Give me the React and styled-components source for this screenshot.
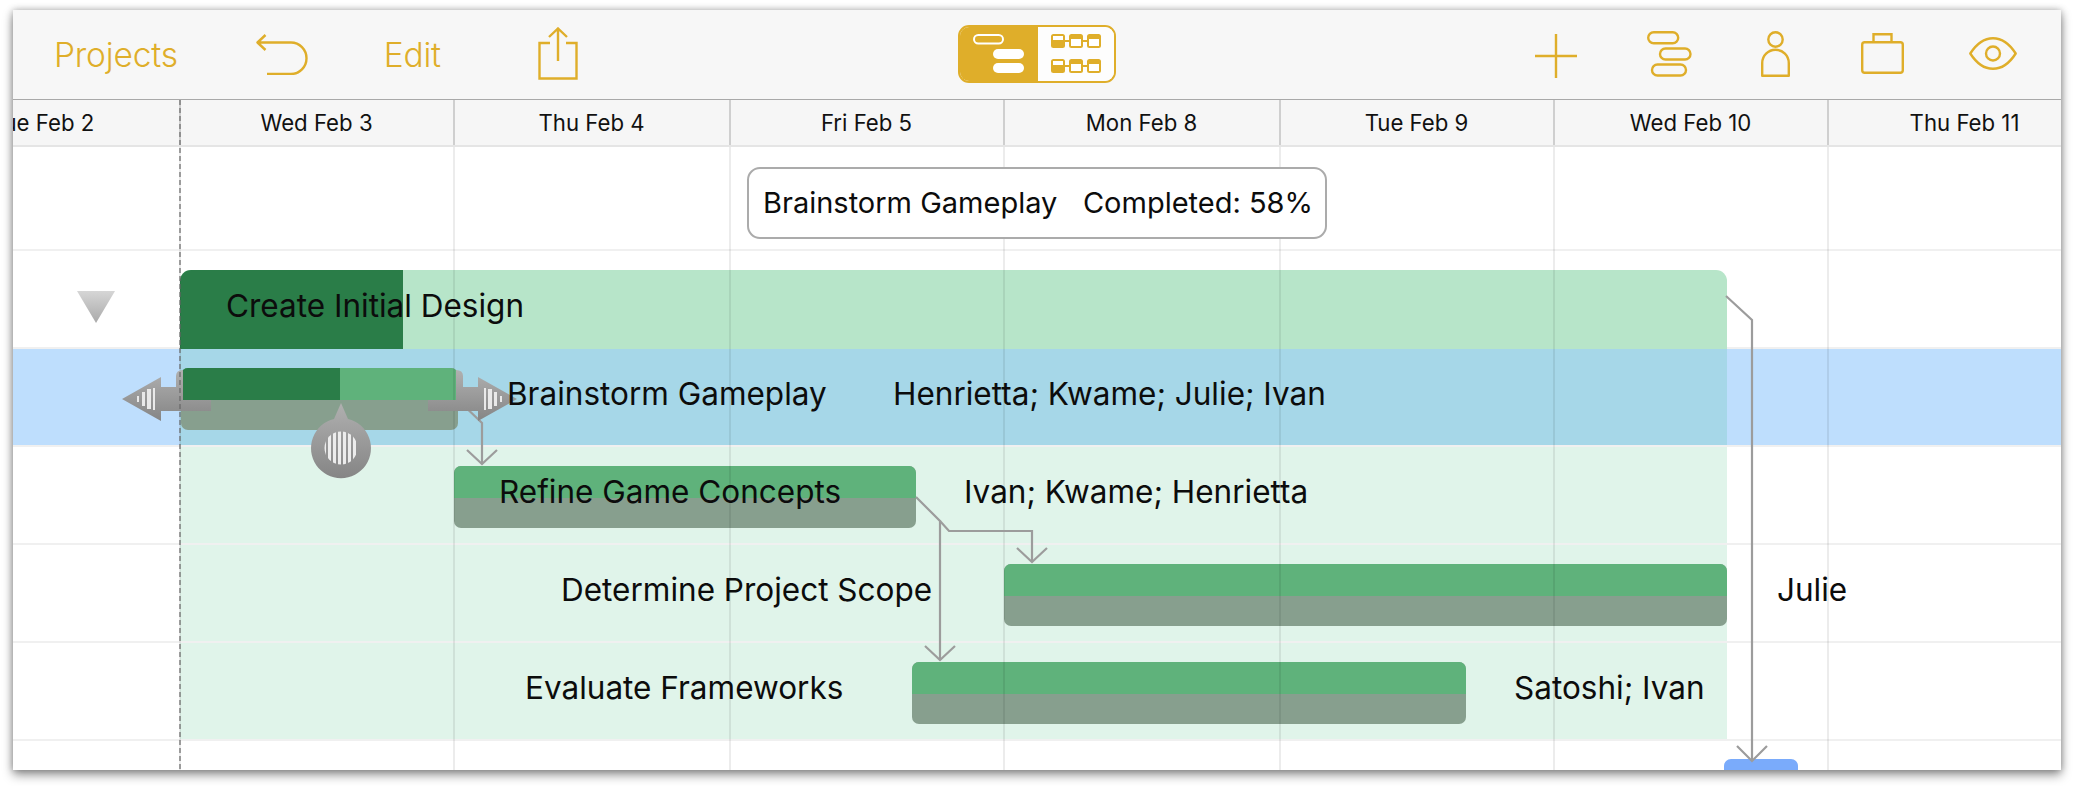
import React from "react";
import styled, { createGlobalStyle } from "styled-components";

const GOLD = "#dfae2a";
const COLUMN_ORIGIN = -106;
const FONT = `Inter, "Noto Sans", "Liberation Sans", sans-serif`;

const Global = createGlobalStyle`
  html, body { margin: 0; background: #fff; }
  body { font-family: ${FONT}; overflow: hidden; }
  #root { width: 2074px; height: 786px; }
`;

const Page = styled.div`
  width: 2074px;
  height: 786px;
  padding: 10px 13px 16px;
  box-sizing: border-box;
`;

const Window = styled.div`
  position: relative;
  width: 2048px;
  height: 760px;
  overflow: hidden;
  background: #fff;
  display: flex;
  flex-direction: column;
`;

const WindowShadow = styled.div`
  width: 2048px;
  height: 760px;
  box-shadow: 0 0 7px rgba(0, 0, 0, 0.28), 0 5px 10px rgba(0, 0, 0, 0.4);
`;

const Toolbar = styled.header`
  height: 89px;
  flex: none;
  display: grid;
  grid-template-columns: 1fr auto 1fr;
  align-items: center;
  background: #f7f7f7;
  border-bottom: 1px solid #a9a9a9;
  color: ${GOLD};
`;

const ToolGroup = styled.div`
  display: flex;
  align-items: center;
  justify-content: ${(p) => (p.$end ? "flex-end" : "flex-start")};
  padding: ${(p) => (p.$end ? "0 44px 0 0" : "0 0 0 41px")};
`;

const ToolText = styled.span`
  font-size: 33.5px;
  font-weight: 300;
  letter-spacing: -0.2px;
  margin-left: ${(p) => p.$gap || 0}px;
`;

const ToolIcon = styled.svg`
  display: block;
  flex: none;
  margin-left: ${(p) => p.$gap || 0}px;
  margin-top: ${(p) => (p.$shift || 0) * 2}px;
  fill: none;
  stroke: ${GOLD};
  stroke-width: 2.4;
`;

const Segmented = styled.div`
  display: flex;
  width: 158px;
  height: 58px;
  margin-top: -2px;
  box-sizing: border-box;
  border: 2px solid ${GOLD};
  border-radius: 11px;
  overflow: hidden;
`;

const Segment = styled.div`
  display: flex;
  align-items: center;
  justify-content: center;
  width: ${(p) => (p.$active ? "78px" : "76px")};
  background: ${(p) => (p.$active ? GOLD : "#fdfdfd")};
`;

const DayHeader = styled.div`
  height: 47px;
  flex: none;
  display: flex;
  box-sizing: border-box;
  margin-left: ${COLUMN_ORIGIN}px;
  background: #f6f6f6;
  border-bottom: 2px solid #e5e5e5;
  width: calc(100% - ${COLUMN_ORIGIN}px);
`;

const DayCell = styled.div`
  flex: 0 0 ${(p) => p.$width}px;
  box-sizing: border-box;
  display: flex;
  align-items: center;
  justify-content: center;
  padding-right: 1px;
  border-right: 2px solid #cfcfcf;
  font-size: 22.2px;
  color: #111;
  white-space: nowrap;
`;

const Rows = styled.div`
  flex: 1;
  display: flex;
  flex-direction: column;
`;

const Row = styled.div`
  position: relative;
  flex: none;
  box-sizing: border-box;
  height: ${(p) => p.$height}px;
  border-bottom: ${(p) => (p.$last ? "none" : "2px solid #f0f0f0")};
  background: ${(p) => (p.$selected ? "#bedefd" : "transparent")};
`;

const TooltipRow = styled(Row)`
  display: flex;
  justify-content: center;
  padding-top: 20px;
`;

const GroupFill = styled.div`
  position: absolute;
  top: 0;
  bottom: 0;
  left: 167px;
  width: 1547px;
  background: rgba(0, 165, 80, 0.12);
`;

const Bar = styled.div`
  position: absolute;
  top: 19px;
  left: ${(p) => p.$left}px;
  width: ${(p) => p.$width}px;
  height: 62px;
  border-radius: 7px;
  overflow: hidden;
  background: #879f8e;
`;

const BarPlan = styled.div`
  height: 32px;
  background: #5fb27b;
`;

const BarDone = styled.div`
  height: 100%;
  width: ${(p) => p.$width}px;
  background: #2a7d48;
`;

const GroupBar = styled.div`
  position: absolute;
  top: 19px;
  left: 167px;
  width: 1547px;
  height: 79px;
  border-radius: 11px 11px 0 0;
  overflow: hidden;
  background: #b7e5c9;
`;

const MilestoneBar = styled.div`
  position: absolute;
  top: 18px;
  left: 1711px;
  width: 74px;
  height: 30px;
  border-radius: 7px 7px 0 0;
  background: #7aabfb;
`;

const Label = styled.span`
  position: absolute;
  z-index: 5;
  left: ${(p) => p.$left}px;
  top: ${(p) => p.$top ?? 25}px;
  font-size: 31.5px;
  line-height: 40px;
  color: #0c0c0c;
  white-space: nowrap;
`;

const Disclosure = styled.svg`
  position: absolute;
  left: 64px;
  top: 40px;
`;

const Tooltip = styled.div`
  z-index: 6;
  width: 580px;
  height: 72px;
  box-sizing: border-box;
  padding: 0 12px 2px 14px;
  display: flex;
  align-items: center;
  justify-content: space-between;
  background: #fff;
  border: 2px solid #ababab;
  border-radius: 13px;
  font-size: 29px;
  color: #0c0c0c;
  white-space: nowrap;
`;

const GridLines = styled.div`
  position: absolute;
  z-index: 2;
  top: 137px;
  bottom: 0;
  left: ${COLUMN_ORIGIN}px;
  display: flex;
  pointer-events: none;
`;

const GridLine = styled.div`
  flex: 0 0 ${(p) => p.$width}px;
  box-sizing: border-box;
  border-right: 2px solid rgba(0, 0, 0, 0.075);
`;

const Overlay = styled.svg`
  position: absolute;
  z-index: 3;
  inset: 0;
  pointer-events: none;
`;

const days = [
  { name: "Tue Feb 2", width: 274 },
  { name: "Wed Feb 3", width: 274 },
  { name: "Thu Feb 4", width: 276 },
  { name: "Fri Feb 5", width: 274 },
  { name: "Mon Feb 8", width: 276 },
  { name: "Tue Feb 9", width: 274 },
  { name: "Wed Feb 10", width: 274 },
  { name: "Thu Feb 11", width: 274 },
];

const tasks = [
  { left: 441, width: 462, labels: [{ text: "Refine Game Concepts", left: 486 }, { text: "Ivan; Kwame; Henrietta", left: 951 }] },
  { left: 991, width: 723, labels: [{ text: "Determine Project Scope", left: 548 }, { text: "Julie", left: 1764 }] },
  { left: 899, width: 554, labels: [{ text: "Evaluate Frameworks", left: 512 }, { text: "Satoshi; Ivan", left: 1501 }] },
];

const connectors = [
  "M458 400 L482 423 V463",
  "M467 450 L482 464 L497 450",
  "M916 497 L940 521 V660",
  "M925 646 L940 660 L955 646",
  "M940 521 L949 531 H1032 V562",
  "M1017 548 L1032 562 L1047 548",
  "M1726 296 L1752 320 V760",
  "M1737 746 L1752 761 L1767 746",
];

const UndoIcon = () => (
  <ToolIcon $gap={78} width="53" height="41" viewBox="0 0 53 41" strokeLinejoin="round">
    <path d="M9.5 1 L1.5 8.5 L9.5 16 M1.5 8.5 H35 A15.5 15.75 0 0 1 35 40 H11" />
  </ToolIcon>
);

const ShareIcon = () => (
  <ToolIcon $gap={97} width="40" height="53" viewBox="0 0 40 53" $shift={-1}>
    <path d="M12 16 H1.5 V51.5 H38.5 V16 H28 M20 1 V34 M11 10 L20 1.5 L29 10" />
  </ToolIcon>
);

const GanttIcon = () => (
  <svg width="52" height="40" viewBox="0 0 52 40" fill="none">
    <rect x="1" y="1" width="29" height="8.5" rx="4.25" stroke="#fff" strokeWidth="2" />
    <rect x="20" y="15" width="31" height="10" rx="5" fill="#fff" />
    <rect x="20" y="29" width="31" height="10" rx="5" fill="#fff" />
  </svg>
);

const NetworkBox = ({ x, y, first }) => (
  <g>
    <rect x={x} y={y} width="14" height="14" rx="2.5" fill={GOLD} />
    <rect x={x + 2} y={first ? y + 2 : y + 5} width="10" height={first ? 4 : 7} fill="#fff" />
  </g>
);

const NetworkIcon = () => (
  <svg width="52" height="40" viewBox="0 0 52 40" fill="none">
    {[0, 25].map((y) => (
      <g key={y}>
        <path d={`M10 ${y + 7} H42`} stroke={GOLD} strokeWidth="2" />
        <NetworkBox x={1} y={y} first />
        <NetworkBox x={19} y={y} />
        <NetworkBox x={37} y={y} />
      </g>
    ))}
  </svg>
);

const PlusIcon = () => (
  <ToolIcon width="42" height="44" viewBox="0 0 42 44" $shift={1}>
    <path d="M21 0 V44 M0 22 H42" />
  </ToolIcon>
);

const TasksIcon = () => (
  <ToolIcon $gap={70} width="45" height="46" viewBox="0 0 45 46" $shift={-1}>
    <rect x="1.2" y="1.2" width="30" height="11" rx="5.5" />
    <rect x="13" y="17.5" width="30.5" height="11" rx="5.5" />
    <rect x="5" y="33.5" width="34" height="11" rx="5.5" />
  </ToolIcon>
);

const PersonIcon = () => (
  <ToolIcon $gap={69} width="29" height="46" viewBox="0 0 29 46" $shift={-1}>
    <circle cx="14.5" cy="8.5" r="7.2" />
    <path d="M1.2 44.8 V32 A13.3 13.3 0 0 1 27.8 32 V44.8 Z" strokeLinejoin="round" />
  </ToolIcon>
);

const CaseIcon = () => (
  <ToolIcon $gap={71} width="43" height="41" viewBox="0 0 43 41" $shift={-1}>
    <rect x="1.2" y="9.2" width="40.6" height="30.6" rx="2.5" />
    <path d="M12.5 9 V1.2 H30.5 V9" />
  </ToolIcon>
);

const EyeIcon = () => (
  <ToolIcon $gap={65} width="48" height="33" viewBox="0 0 48 33" $shift={-1}>
    <path d="M1.3 16.5 C8 6 16 1.2 24 1.2 C32 1.2 40 6 46.7 16.5 C40 27 32 31.8 24 31.8 C16 31.8 8 27 1.3 16.5 Z" strokeLinejoin="round" />
    <circle cx="24" cy="16.5" r="7" />
  </ToolIcon>
);

const DragHandles = () => (
  <g>
    <defs>
      <linearGradient id="handleFill" x1="0" y1="0" x2="0" y2="1">
        <stop offset="0" stopColor="#b0b0b0" />
        <stop offset="1" stopColor="#858585" />
      </linearGradient>
      <clipPath id="knobWindow">
        <circle cx="341" cy="448" r="16.5" />
      </clipPath>
    </defs>
    {[undefined, "matrix(-1 0 0 1 639 0)"].map((transform, index) => (
      <g key={index} transform={transform}>
        <path
          fill="url(#handleFill)"
          d="M122 399 L161 377 V387 H176 V376 Q176 370 183 370 V400 H211 V411 H161 V421 Z"
        />
        <g fill="#e9e9e9">
          <rect x="137" y="396" width="2" height="6" />
          <rect x="142" y="392" width="3" height="14" />
          <rect x="147" y="389" width="4" height="20" />
          <rect x="153" y="388" width="2" height="22" />
        </g>
      </g>
    ))}
    <path fill="url(#handleFill)" d="M341 403 L348 419 A30 30 0 1 1 334 419 Z" />
    <g clipPath="url(#knobWindow)" fill="#ececec">
      {[323, 328, 333, 338, 343, 348, 353, 358].map((x) => (
        <rect key={x} x={x} y="430" width="3" height="36" />
      ))}
    </g>
  </g>
);

export default function App() {
  return (
    <Page>
      <Global />
      <WindowShadow>
        <Window>
          <Toolbar>
            <ToolGroup>
              <ToolText>Projects</ToolText>
              <UndoIcon />
              <ToolText $gap={75}>Edit</ToolText>
              <ShareIcon />
            </ToolGroup>
            <Segmented>
              <Segment $active>
                <GanttIcon />
              </Segment>
              <Segment>
                <NetworkIcon />
              </Segment>
            </Segmented>
            <ToolGroup $end>
              <PlusIcon />
              <TasksIcon />
              <PersonIcon />
              <CaseIcon />
              <EyeIcon />
            </ToolGroup>
          </Toolbar>

          <DayHeader>
            {days.map((day) => (
              <DayCell key={day.name} $width={day.width}>{day.name}</DayCell>
            ))}
          </DayHeader>

          <Rows>
            <TooltipRow $height={104}>
              <Tooltip>
                <span>Brainstorm Gameplay</span>
                <span>Completed: 58%</span>
              </Tooltip>
            </TooltipRow>

            <Row $height={98}>
              <Disclosure width="38" height="32" viewBox="0 0 38 32">
                <defs>
                  <linearGradient id="disclosureFill" x1="0" y1="0" x2="0" y2="1">
                    <stop offset="0" stopColor="#d6d6d6" />
                    <stop offset="1" stopColor="#a9a9a9" />
                  </linearGradient>
                </defs>
                <path d="M0 0 H38 L19 32 Z" fill="url(#disclosureFill)" />
              </Disclosure>
              <GroupBar>
                <BarDone $width={223} />
              </GroupBar>
              <Label $left={213} $top={35}>Create Initial Design</Label>
            </Row>

            <Row $height={98} $selected>
              <GroupFill />
              <Bar $left={168} $width={277}>
                <BarPlan>
                  <BarDone $width={159} />
                </BarPlan>
              </Bar>
              <Label $left={494}>Brainstorm Gameplay</Label>
              <Label $left={880}>Henrietta; Kwame; Julie; Ivan</Label>
            </Row>

            {tasks.map((task) => (
              <Row $height={98} key={task.left}>
                <GroupFill />
                <Bar $left={task.left} $width={task.width}>
                  <BarPlan />
                </Bar>
                {task.labels.map((label) => (
                  <Label key={label.text} $left={label.left}>{label.text}</Label>
                ))}
              </Row>
            ))}

            <Row $height={29} $last>
              <MilestoneBar />
            </Row>
          </Rows>

          <GridLines>
            {days.map((day) => (
              <GridLine key={day.name} $width={day.width} />
            ))}
          </GridLines>

          <Overlay width="2048" height="760" viewBox="13 10 2048 760" fill="none">
            {connectors.map((d) => (
              <path key={d} d={d} stroke="#9c9c9c" strokeWidth="2.2" />
            ))}
            <DragHandles />
            <line x1="180" y1="100" x2="180" y2="770" stroke="#666" strokeOpacity="0.6" strokeWidth="2" strokeDasharray="5 3" />
          </Overlay>
        </Window>
      </WindowShadow>
    </Page>
  );
}
